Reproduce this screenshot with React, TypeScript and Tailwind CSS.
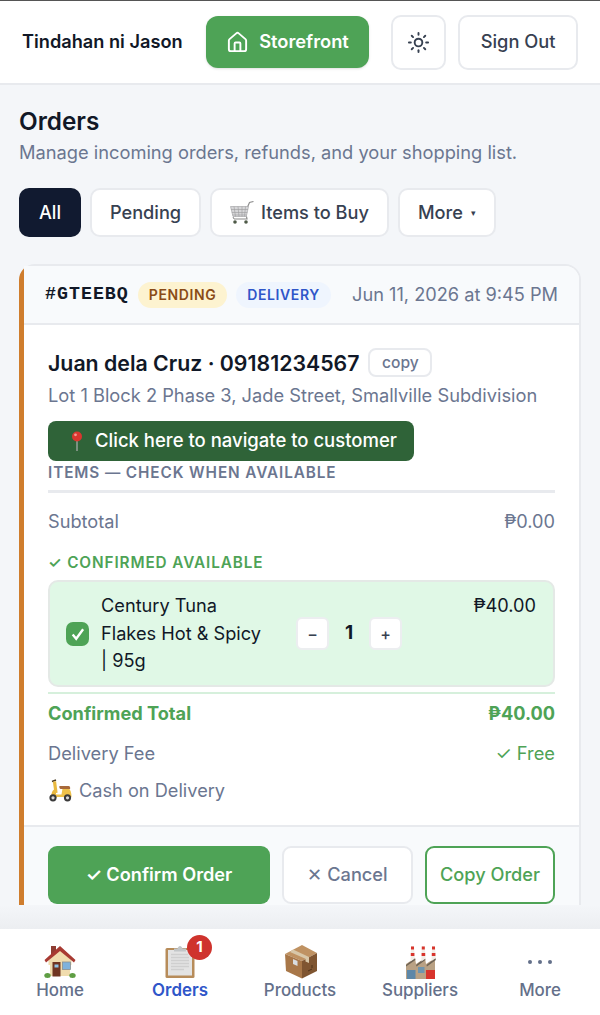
import type { ReactNode } from "react";
import { Home, Sun } from "lucide-react";

function Pin() {
  return (
    <svg width="16" height="22" viewBox="0 0 16 22" className="shrink-0">
      <rect x="7.400" y="9" width="1.200" height="12" fill="#b0b0b0" />
      <circle cx="8" cy="6.500" r="5" fill="#d9362f" />
      <circle cx="6.500" cy="4.800" r="1.400" fill="#f29a92" />
    </svg>
  );
}

function Cart() {
  return (
    <svg width="25" height="24" viewBox="0 0 25 24" className="shrink-0">
      <path d="M17.500 6l2-4.500 4-1" fill="none" stroke="#8f8f8f" strokeWidth="1.200" />
      <path d="M0.500 5.500h18l-2.200 10H3z" fill="#d6d6d8" stroke="#a8a8aa" strokeWidth="0.700" />
      <path d="M4 5.500l1.500 10M8 5.500l1 10M12 5.500v10M15.500 5.500l-1 10M1 8.500h17M1.800 11.500h15.500M2.500 14h14" stroke="#9c9c9e" strokeWidth="0.600" />
      <path d="M16.500 15.500l.5 2.500H4" fill="none" stroke="#8a8a8a" strokeWidth="1.200" />
      <path d="M3 16l1 2" stroke="#8a8a8a" strokeWidth="1" />
      <circle cx="5" cy="21" r="1.800" fill="#4e5a48" />
      <circle cx="16" cy="21" r="1.800" fill="#4e5a48" />
    </svg>
  );
}

function Scooter() {
  return (
    <svg width="24" height="23" viewBox="0 0 24 23" className="shrink-0">
      <path d="M4 2.500l4-1.500" stroke="#4a3a20" strokeWidth="1.400" fill="none" />
      <path d="M6.500 2.500L8 14" stroke="#e9b93f" strokeWidth="3.200" fill="none" />
      <path d="M3.500 15c.5-3 2-4.500 4-5l1 9H2.500z" fill="#e9b93f" />
      <path d="M8 15.500h5.500l1-6h6c2 1 3 4 3 8.500H8z" fill="#eec14a" />
      <path d="M11.500 7h9c1.500 0 2 1.500 1.500 3h-9.500c-1 0-1.500-2.500-1-3z" fill="#a8693a" />
      <circle cx="5" cy="18.800" r="3.600" fill="#3a3a3a" />
      <circle cx="19.500" cy="18.800" r="3.600" fill="#3a3a3a" />
      <circle cx="5" cy="18.800" r="1.600" fill="#d8d8d8" />
      <circle cx="19.500" cy="18.800" r="1.600" fill="#d8d8d8" />
    </svg>
  );
}

function HouseE() {
  return (
    <svg width="32" height="33" viewBox="0 0 32 33">
      <rect x="7" y="1" width="5" height="9" fill="#8f3d33" />
      <path d="M6 15h20v16H6z" fill="#f0dcae" />
      <path d="M16 4.500L4.500 15.500V20h23v-4.500z" fill="#f0dcae" />
      <path d="M0.500 15L16 1l15.500 14-1.500 2.500L16 6 2 17.500z" fill="#a83a32" />
      <rect x="8.500" y="17" width="8" height="14.500" fill="#6f3522" />
      <rect x="10.500" y="19.500" width="4" height="3" fill="#8fc4e6" />
      <rect x="18.500" y="17" width="8" height="7.500" fill="#7fb2dc" stroke="#8a8f90" strokeWidth="0.800" />
      <ellipse cx="3.500" cy="30.500" rx="3.200" ry="2.500" fill="#5f9e44" />
      <ellipse cx="28.500" cy="30.500" rx="3.200" ry="2.500" fill="#5f9e44" />
    </svg>
  );
}

function Clipboard() {
  return (
    <svg width="30" height="33" viewBox="0 0 30 33">
      <rect x="0.500" y="3" width="29" height="30" rx="1.500" fill="#b78c5a" />
      <rect x="3" y="5" width="24" height="25.500" fill="#e3e3e3" />
      <path d="M6 9.500h17M6 12.500h18M6 15.500h18M6 18.500h18M6 21.500h18M6 24.500h13" stroke="#cfcfcf" strokeWidth="1.300" />
      <path d="M9 6.500V3.500h3.500C13 2 14 1 15 1s2 1 2.500 2.500H21v3z" fill="#c2c6c8" />
    </svg>
  );
}

function Box() {
  return (
    <svg width="33" height="35" viewBox="0 0 33 35">
      <path d="M18 1L1 10l17 7 15-8z" fill="#bf9262" />
      <path d="M1 10l17 7v17.500L2 27z" fill="#a87748" />
      <path d="M18 17l15-8v18l-15 7.500z" fill="#7f5531" />
      <path d="M9 5.500l16 7.500 0 6 -3.500 -1.500V14.800L6 8z" fill="#d8c7a8" />
      <rect x="9" y="15" width="4.500" height="5" fill="#d9dde0" transform="skewY(24) translate(0 -4)" />
      <path d="M24 27l4-2M28 21v3" stroke="#4f3218" strokeWidth="1" />
    </svg>
  );
}

function Factory() {
  return (
    <svg width="33" height="34" viewBox="0 0 33 34">
      <path d="M2 34V19l9-6 1 6 9-6 1 6 9-6v21z" fill="#b9a184" />
      <path d="M2 20l9-7 .4 2L2 21.500zM12 20l9-7 .4 2L12.500 21.500zM22.500 20l9-7 .4 2-9 6.500z" fill="#6e6355" />
      <path d="M7 1h3l.8 12.500L6.500 16.500zM17.800 1h3l.8 12.500-4.300 3zM28 1h3l.8 12-4.300 3z" fill="#f2ede6" />
      <path d="M7 1.500h3v3H7zM6.800 8h3.600v3H6.800zM17.800 1.500h3v3h-3zM17.600 8h3.600v3h-3.600zM28 1.500h3v3h-3zM27.800 8h3.600v3h-3.600z" fill="#d8342c" />
      <rect x="3" y="25" width="8.500" height="9" fill="#5d87a8" />
      <rect x="14" y="22" width="6.500" height="6" fill="#6f95ae" />
      <rect x="22" y="25" width="9" height="9" fill="#d8342c" />
    </svg>
  );
}

function Dots() {
  return (
    <svg width="26" height="6" viewBox="0 0 26 6">
      <circle cx="3" cy="3" r="2" fill="#64708a" />
      <circle cx="13" cy="3" r="2" fill="#64708a" />
      <circle cx="23" cy="3" r="2" fill="#64708a" />
    </svg>
  );
}

function NavItem({ label, active, children }: { label: string; active?: boolean; children: ReactNode }) {
  return (
    <div className="flex flex-1 flex-col items-center">
      <div className="relative flex h-[35px] items-center justify-center">{children}</div>
      <span className={active ? "text-[16.900px] leading-[22px] font-semibold text-[#2f56c9]" : "text-[16.900px] leading-[22px] font-medium text-[#64708a]"}>
        {label}
      </span>
    </div>
  );
}

export default function App() {
  return (
    <div className="flex h-[1015px] w-[600px] flex-col overflow-hidden bg-[#f4f6f9] font-['Inter',sans-serif]">
      <header className="flex h-[85px] shrink-0 items-center border-t-[1px] border-b-[2px] border-t-[#555] border-b-[#e8eaee] bg-white pr-[22px] pl-[22px]">
        <span className="text-[18.200px] font-semibold whitespace-nowrap text-[#111827]">Tindahan ni Jason</span>
        <button className="ml-[23px] flex h-[52px] w-[164px] items-center justify-center gap-[10px] rounded-[12px] bg-[#4ea356] text-[18.270px] font-semibold text-white shadow-sm">
          <Home size={23} strokeWidth={2} />
          Storefront
        </button>
        <button className="ml-[22px] flex h-[55px] w-[55px] items-center justify-center rounded-[10px] border-2 border-[#e8eaee] bg-white text-[#374151]">
          <Sun size={23} strokeWidth={2} />
        </button>
        <button className="ml-[12px] flex h-[55px] w-[120px] items-center justify-center rounded-[10px] border-2 border-[#e8eaee] bg-white text-[18.270px] font-medium text-[#374151]">
          Sign Out
        </button>
      </header>

      <main className="h-[820px] shrink-0 overflow-hidden px-[19px] pt-[21px]">
        <h1 className="text-[24.300px] leading-[30px] font-semibold text-[#111827]">Orders</h1>
        <p className="mt-[3px] text-[18.270px] leading-[26px] text-[#6b7690]">Manage incoming orders, refunds, and your shopping list.</p>

        <div className="mt-[23px] flex gap-[9px]">
          <button className="flex h-[49px] w-[62px] items-center justify-center rounded-[10px] bg-[#111a30] text-[18.200px] font-medium text-white">All</button>
          <button className="flex h-[49px] w-[111px] items-center justify-center rounded-[10px] border-2 border-[#e8eaee] bg-white text-[18.200px] font-medium text-[#374151]">Pending</button>
          <button className="flex h-[49px] w-[179px] items-center justify-center gap-[6px] rounded-[10px] border-2 border-[#e8eaee] bg-white text-[18.200px] font-medium text-[#374151]">
            <Cart />
            Items to Buy
          </button>
          <button className="flex h-[49px] w-[98px] items-center justify-center gap-[8px] rounded-[10px] border-2 border-[#e8eaee] bg-white text-[18.200px] font-medium text-[#374151]">
            More
            <span className="text-[9px] text-[#374151]">▾</span>
          </button>
        </div>

        <section className="mt-[27px] rounded-[16px] border-2 border-l-[5px] border-[#e8eaee] border-l-[#cf7d2d] bg-white">
          <div className="flex h-[59px] items-center justify-between rounded-tr-[14px] border-b-2 border-[#e8eaee] bg-[#f8fafc] pr-[21px] pl-[21px]">
            <div className="flex items-center gap-[9px]">
              <span className="font-['Liberation_Mono',monospace] text-[18.300px] font-bold tracking-[1px] text-[#111827]">#GTEEBQ</span>
              <span className="flex h-[26px] items-center rounded-full bg-[#fdf3d0] px-[11px] text-[14px] font-semibold tracking-[0.600px] text-[#8a4b16]">PENDING</span>
              <span className="flex h-[26px] items-center rounded-full bg-[#eff5fe] px-[11px] text-[14px] font-semibold tracking-[0.600px] text-[#2f56c9]">DELIVERY</span>
            </div>
            <span className="text-[18.200px] whitespace-nowrap text-[#6b7690]">Jun 11, 2026 at 9:45 PM</span>
          </div>

          <div className="px-[24px] pt-[23px]">
            <div className="flex items-center gap-[9px]">
              <span className="text-[21.300px] leading-[28px] font-semibold whitespace-nowrap text-[#111827]">Juan dela Cruz · 09181234567</span>
              <span className="flex h-[29px] w-[64px] items-center justify-center rounded-[8px] border-2 border-[#e8eaee] bg-white text-[15.600px] font-medium text-[#6b7690]">copy</span>
            </div>
            <p className="mt-[5px] text-[18.270px] leading-[26px] whitespace-nowrap text-[#6b7690]">Lot 1 Block 2 Phase 3, Jade Street, Smallville Subdivision</p>
            <div className="mt-[13px] flex h-[40px] w-[366px] items-center gap-[10px] rounded-[8px] bg-[#2f6338] pl-[21px] text-[18.500px] font-medium text-white">
              <Pin />
              Click here to navigate to customer
            </div>
            <div className="mt-[2px] border-b-[3px] border-[#e8eaee] pb-[7px] text-[15.300px] leading-[20px] font-semibold tracking-[0.900px] text-[#6b7690]">ITEMS — CHECK WHEN AVAILABLE</div>

            <div className="mt-[15px] flex justify-between text-[18.200px] leading-[26px] text-[#6b7690]">
              <span>Subtotal</span>
              <span>₱0.00</span>
            </div>

            <div className="mt-[19px] text-[15.300px] leading-[20px] font-semibold tracking-[0.900px] text-[#4ea356]">✓ CONFIRMED AVAILABLE</div>

            <div className="mt-[7px] flex h-[107px] items-center rounded-[10px] border-2 border-[#e4e9e6] bg-[#e0f8e6] pr-[17px] pl-[16px]">
              <span className="flex h-[24px] w-[23px] shrink-0 items-center justify-center rounded-[7px] bg-[#4ea356]">
                <svg width="16" height="16" viewBox="0 0 15 15"><path d="M2.500 8l3.300 4 6.500-9" fill="none" stroke="white" strokeWidth="2.200" /></svg>
              </span>
              <div className="ml-[12px] w-[165px] shrink-0 text-[18.200px] leading-[27.500px] text-[#111827]">
                Century Tuna Flakes Hot &amp; Spicy | 95g
              </div>
              <div className="ml-[30px] flex items-center">
                <span className="flex h-[33px] w-[33px] items-center justify-center rounded-[6px] border-2 border-[#eceef0] bg-white text-[16px] font-medium text-[#374151]">−</span>
                <span className="w-[40px] text-center text-[19px] font-bold text-[#111827]">1</span>
                <span className="flex h-[33px] w-[33px] items-center justify-center rounded-[6px] border-2 border-[#eceef0] bg-white text-[16px] font-medium text-[#374151]">+</span>
              </div>
              <span className="mb-[58px] ml-auto text-[18.200px] leading-[26px] text-[#111827]">₱40.00</span>
            </div>

            <div className="mt-[5px] flex justify-between border-t-2 border-[#d6f0dc] pt-[5px] text-[18.200px] leading-[28px] font-bold text-[#4ea356]">
              <span>Confirmed Total</span>
              <span>₱40.00</span>
            </div>

            <div className="mt-[13px] flex justify-between text-[18.270px] leading-[26px] text-[#6b7690]">
              <span>Delivery Fee</span>
              <span className="text-[#4ea356]">✓ Free</span>
            </div>

            <div className="mt-[11px] flex items-center gap-[7px] pb-[22px] text-[18.200px] leading-[26px] text-[#6b7690]">
              <Scooter />
              Cash on Delivery
            </div>
          </div>

          <div className="flex gap-[12px] border-t-2 border-[#e8eaee] bg-[#f8fafc] px-[24px] pt-[19px] pb-[20px]">
            <button className="flex h-[58px] w-[222px] items-center justify-center rounded-[9px] bg-[#4ea356] text-[18.200px] font-semibold text-white">✓ Confirm Order</button>
            <button className="flex h-[58px] w-[131px] items-center justify-center rounded-[9px] border-2 border-[#e8eaee] bg-white text-[18.200px] font-medium text-[#6b7690]">✕ Cancel</button>
            <button className="flex h-[58px] w-[130px] items-center justify-center rounded-[9px] border-2 border-[#4ea356] bg-white text-[18.200px] font-medium text-[#4ea356]">Copy Order</button>
          </div>
        </section>
      </main>

      <div className="h-[24px] shrink-0 bg-gradient-to-b from-[#f4f6f9] to-[#eceef1]" />

      <nav className="flex h-[86px] shrink-0 bg-white pt-[15px]">
        <NavItem label="Home"><HouseE /></NavItem>
        <NavItem label="Orders" active>
          <Clipboard />
          <span className="absolute -top-[9px] -right-[17px] flex h-[25px] w-[25px] items-center justify-center rounded-full bg-[#cf332d] text-[15px] font-bold text-white">1</span>
        </NavItem>
        <NavItem label="Products"><Box /></NavItem>
        <NavItem label="Suppliers"><Factory /></NavItem>
        <NavItem label="More"><Dots /></NavItem>
      </nav>
    </div>
  );
}
